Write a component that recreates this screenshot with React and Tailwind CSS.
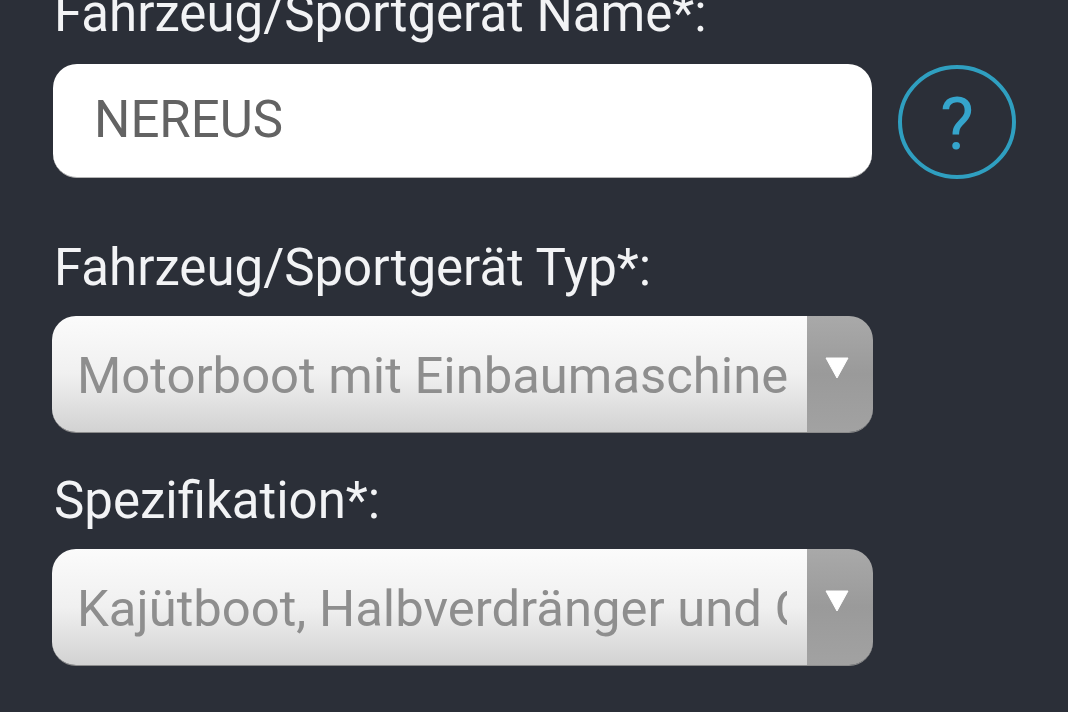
function Select({ text }) {
  return (
    <div className="flex h-[117px] w-[821px] ml-[-1px] overflow-hidden rounded-[24px] border-b border-[#8c8c8c]">
      <div className="flex-1 min-w-0 bg-gradient-to-b from-[#fbfbfb] via-[#f0f0f0] to-[#d2d2d2] pl-[25px] pr-[20px] flex items-center">
        <div className="overflow-hidden whitespace-nowrap text-[50.8px] leading-[60px] text-[#8e8e8e] mt-[4px]">{text}</div>
      </div>
      <div className="w-[66px] shrink-0 bg-gradient-to-b from-[#a9a9a9] via-[#9a9a9a] to-[#a2a2a2] flex justify-center pt-[41px] pr-[6px]">
        <svg width="24" height="22" viewBox="0 0 24 22" className="shrink-0">
          <path d="M1 1H23L12 21Z" fill="#ffffff" stroke="#ffffff" strokeLinejoin="round" />
        </svg>
      </div>
    </div>
  );
}

export default function App() {
  return (
    <div className="h-[712px] w-[1068px] overflow-hidden bg-[#2b2f38] pl-[53px] font-['Roboto',sans-serif] text-[#f2f3f5]">
      <div className="mt-[-16px] pl-[1px] text-[51px] leading-[60px]">Fahrzeug/Sportgerät Name*:</div>
      <div className="mt-[20px] flex items-start gap-[26px]">
        <div className="flex h-[114px] w-[819px] items-center rounded-[24px] border-b border-[#b5b5b5] bg-white pl-[41px] text-[51px] text-[#636363]">
          <span>NEREUS</span>
        </div>
        <svg width="120" height="116" viewBox="0 0 120 116" className="shrink-0">
          <ellipse cx="59" cy="58" rx="57" ry="55" fill="none" stroke="#2f9fc0" strokeWidth="4" />
          <text x="59" y="85" textAnchor="middle" fontSize="72" fontFamily="Roboto" fontWeight="400" fill="#35a5cc">?</text>
        </svg>
      </div>
      <div className="mt-[58px] pl-[1px] text-[51px] leading-[60px]">Fahrzeug/Sportgerät Typ*:</div>
      <div className="mt-[18px]"><Select text="Motorboot mit Einbaumaschine" /></div>
      <div className="mt-[38px] pl-[1px] text-[51px] leading-[60px]">Spezifikation*:</div>
      <div className="mt-[18px]"><Select text="Kajütboot, Halbverdränger und Gleiter" /></div>
    </div>
  );
}
